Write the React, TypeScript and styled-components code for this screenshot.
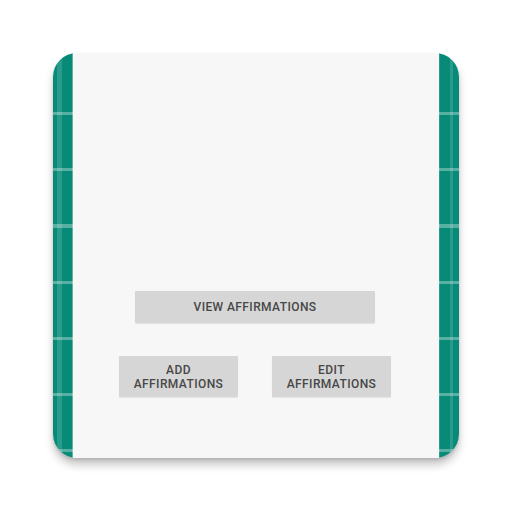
import styled, { createGlobalStyle } from "styled-components";

const GlobalStyle = createGlobalStyle`
  html, body {
    margin: 0;
    padding: 0;
    background: #ffffff;
    font-family: Roboto, "Liberation Sans", sans-serif;
  }
`;

const Page = styled.div`
  width: 512px;
  height: 512px;
  padding: 53px 0 0 53px;
  box-sizing: border-box;
`;

const Icon = styled.div`
  display: flex;
  width: 406px;
  height: 405px;
  border-radius: 24px;
  overflow: hidden;
  box-shadow: 0 7px 9px rgba(0, 0, 0, 0.22), 0 2px 3px rgba(0, 0, 0, 0.12);
`;

// teal side strip with pale grid lines
const Strip = styled.div<{ $side: "left" | "right" }>`
  width: 20px;
  flex-shrink: 0;
  background-color: #078a77;
  background-image:
    repeating-linear-gradient(
      to bottom,
      transparent 0,
      transparent 53px,
      rgba(255, 255, 255, 0.32) 53px,
      rgba(255, 255, 255, 0.32) 56.2px
    ),
    linear-gradient(
      to right,
      transparent ${(p) => (p.$side === "left" ? 4 : 11)}px,
      rgba(255, 255, 255, 0.14) ${(p) => (p.$side === "left" ? 4 : 11)}px,
      rgba(255, 255, 255, 0.14) ${(p) => (p.$side === "left" ? 9 : 14)}px,
      transparent ${(p) => (p.$side === "left" ? 9 : 14)}px
    );
  background-position: 0 6px, 0 0;
  box-shadow: ${(p) =>
    p.$side === "left"
      ? "inset -1px 0 0 rgba(255,255,255,0.35)"
      : "inset 1px 0 0 rgba(255,255,255,0.15)"};
`;

const Panel = styled.div`
  flex: 1;
  background: #f7f7f7;
  display: flex;
  flex-direction: column;
  align-items: center;
  justify-content: flex-end;
  padding: 0 2px 61px 0;
  gap: 33px;
`;

const Row = styled.div`
  display: flex;
  gap: 34px;
`;

const Button = styled.button<{ $w: number; $h: number }>`
  width: ${(p) => p.$w}px;
  height: ${(p) => p.$h}px;
  border: none;
  border-radius: 1px;
  background: #d6d6d6;
  color: #474747;
  font-family: Roboto, "Liberation Sans", sans-serif;
  font-size: 12px;
  font-weight: 500;
  letter-spacing: 0.4px;
  line-height: 14px;
  text-transform: uppercase;
  padding: 0;
  display: flex;
  align-items: center;
  justify-content: center;
  text-align: center;
  box-shadow: 0 1px 1px rgba(0, 0, 0, 0.08);
`;

export default function App() {
  return (
    <>
      <GlobalStyle />
      <Page>
        <Icon>
          <Strip $side="left" />
          <Panel>
            <Button $w={240} $h={32}>View Affirmations</Button>
            <Row>
              <Button $w={119} $h={41}>
                Add
                <br />
                Affirmations
              </Button>
              <Button $w={119} $h={41}>
                Edit
                <br />
                Affirmations
              </Button>
            </Row>
          </Panel>
          <Strip $side="right" />
        </Icon>
      </Page>
    </>
  );
}
